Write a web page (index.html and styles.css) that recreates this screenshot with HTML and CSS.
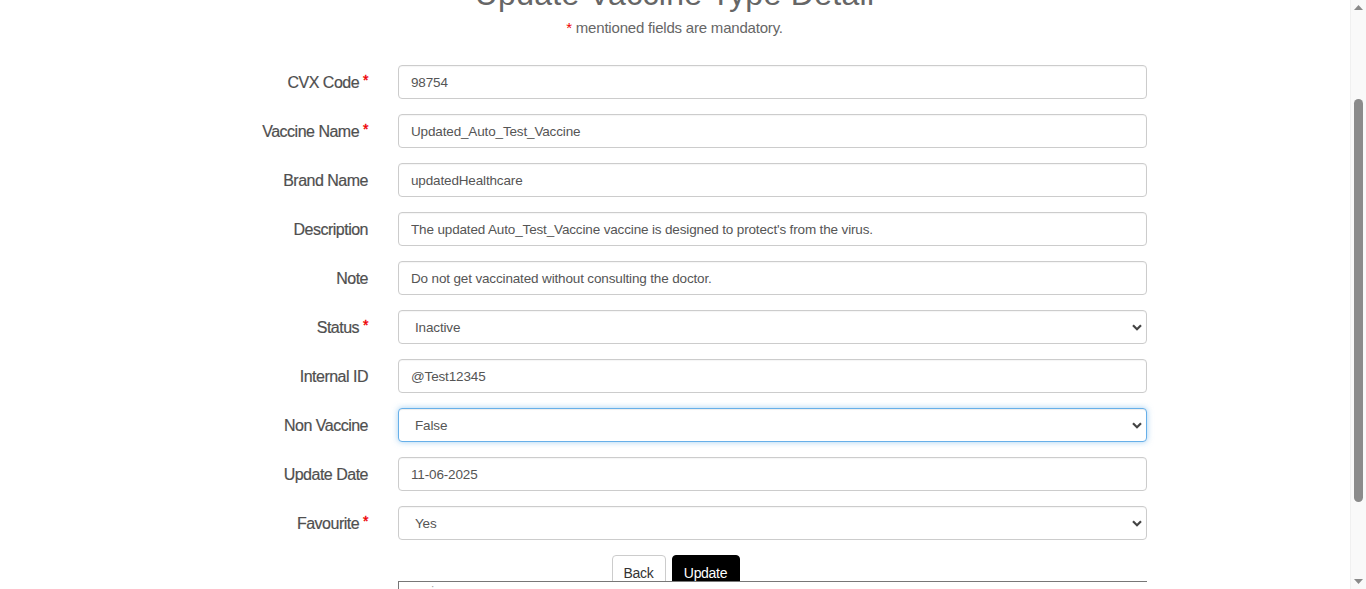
FILE: index.html
```html
<!DOCTYPE html>
<html lang="en">
<head>
<meta charset="utf-8">
<title>Update Vaccine Type Detail</title>
<link rel="stylesheet" href="styles.css">
</head>
<body>
<div class="page">
  <h1 class="title">Update Vaccine Type Detail</h1>
  <p class="subtitle"><span class="req">*</span> mentioned fields are mandatory.</p>

  <form class="form">
    <div class="row">
      <label class="label">CVX Code <span class="req">*</span></label>
      <input class="control" type="text" value="98754">
    </div>
    <div class="row">
      <label class="label">Vaccine Name <span class="req">*</span></label>
      <input class="control" type="text" value="Updated_Auto_Test_Vaccine">
    </div>
    <div class="row">
      <label class="label">Brand Name</label>
      <input class="control" type="text" value="updatedHealthcare">
    </div>
    <div class="row">
      <label class="label">Description</label>
      <input class="control" type="text" value="The updated Auto_Test_Vaccine vaccine is designed to protect's from the virus.">
    </div>
    <div class="row">
      <label class="label">Note</label>
      <input class="control" type="text" value="Do not get vaccinated without consulting the doctor.">
    </div>
    <div class="row">
      <label class="label">Status <span class="req">*</span></label>
      <div class="select-wrap">
        <select class="control select"><option>Inactive</option><option>Active</option></select>
        <svg class="chev" width="10" height="7" viewBox="0 0 10 7"><path d="M1 1.2 L5 5.2 L9 1.2" fill="none" stroke="#444" stroke-width="2.2"/></svg>
      </div>
    </div>
    <div class="row">
      <label class="label">Internal ID</label>
      <input class="control" type="text" value="@Test12345">
    </div>
    <div class="row">
      <label class="label">Non Vaccine</label>
      <div class="select-wrap">
        <select class="control select focus"><option>False</option><option>True</option></select>
        <svg class="chev" width="10" height="7" viewBox="0 0 10 7"><path d="M1 1.2 L5 5.2 L9 1.2" fill="none" stroke="#444" stroke-width="2.2"/></svg>
      </div>
    </div>
    <div class="row">
      <label class="label">Update Date</label>
      <input class="control" type="text" value="11-06-2025">
    </div>
    <div class="row">
      <label class="label">Favourite <span class="req">*</span></label>
      <div class="select-wrap">
        <select class="control select"><option>Yes</option><option>No</option></select>
        <svg class="chev" width="10" height="7" viewBox="0 0 10 7"><path d="M1 1.2 L5 5.2 L9 1.2" fill="none" stroke="#444" stroke-width="2.2"/></svg>
      </div>
    </div>

    <div class="actions">
      <button type="button" class="btn btn-back">Back</button>
      <button type="button" class="btn btn-update">Update</button>
    </div>
    <div class="below"><span class="dot">·</span></div>
  </form>
</div>

<div class="scrollbar">
  <svg class="arrow up" width="9" height="5" viewBox="0 0 9 5"><path d="M0 5 L4.5 0 L9 5 Z" fill="#8a8a8a"/></svg>
  <div class="thumb"></div>
  <svg class="arrow down" width="9" height="5" viewBox="0 0 9 5"><path d="M0 0 L4.5 5 L9 0 Z" fill="#8a8a8a"/></svg>
</div>
</body>
</html>
```

FILE: styles.css
```css
html, body {
  margin: 0;
  padding: 0;
  overflow: hidden;
  background: #fff;
}

body {
  font-family: "Liberation Sans", Arial, sans-serif;
  color: #555;
}

.page {
  width: 1349px;
  height: 589px;
  overflow: hidden;
}

.title {
  margin: -23px 0 0 0;
  text-align: center;
  font-size: 32px;
  line-height: 35px;
  font-weight: 400;
  color: #666;
  letter-spacing: 0.3px;
}

.subtitle {
  margin: 7px 0 0 0;
  text-align: center;
  font-size: 15px;
  line-height: 17px;
  color: #666;
  letter-spacing: -0.2px;
}

.req {
  color: #e00;
}

.form {
  margin-top: 29px;
  display: flex;
  flex-direction: column;
  gap: 15px;
}

.row {
  display: flex;
  align-items: center;
  gap: 30px;
  height: 34px;
}

.label {
  width: 368px;
  padding-top: 2px;
  text-align: right;
  font-size: 16px;
  color: #4f4f4f;
  letter-spacing: -0.5px;
  -webkit-text-stroke: 0.2px #4f4f4f;
}

.label .req {
  font-size: 14px;
  position: relative;
  top: -3px;
  -webkit-text-stroke: 0.4px #e00;
}

.control {
  box-sizing: border-box;
  width: 749px;
  height: 34px;
  border: 1px solid #ccc;
  border-radius: 4px;
  padding: 0 12px;
  font-family: "Liberation Sans", Arial, sans-serif;
  font-size: 13.5px;
  letter-spacing: -0.15px;
  color: #555;
  background: #fff;
  outline: none;
  box-shadow: inset 0 1px 1px rgba(0, 0, 0, 0.04);
}

.select-wrap {
  position: relative;
  width: 749px;
  height: 34px;
}

.select {
  appearance: none;
  -webkit-appearance: none;
  padding-left: 16px;
}

.select.focus {
  border-color: #66afe9;
  box-shadow: inset 0 1px 1px rgba(0, 0, 0, 0.075), 0 0 6px rgba(102, 175, 233, 0.6);
}

.chev {
  position: absolute;
  right: 5px;
  top: 14px;
  pointer-events: none;
}

.actions {
  margin-top: 0;
  height: 26px;
  display: flex;
  justify-content: center;
  gap: 6px;
  overflow: hidden;
  padding-left: 2px;
}

.btn {
  height: 34px;
  border-radius: 4px;
  font-family: "Liberation Sans", Arial, sans-serif;
  font-size: 14px;
  letter-spacing: -0.3px;
  padding: 8px 12px 0 12px;
  box-sizing: border-box;
  line-height: 18px;
  align-self: flex-start;
  display: flex;
  align-items: flex-start;
  justify-content: center;
}

.btn-back {
  width: 54px;
  background: #fff;
  border: 1px solid #ccc;
  color: #333;
}

.btn-update {
  width: 68px;
  background: #000;
  border: 1px solid #000;
  color: #fff;
}

.below {
  margin-top: -15px;
  margin-left: 398px;
  width: 749px;
  height: 20px;
  border-top: 1px solid #777;
  border-left: 1px solid #777;
  box-sizing: border-box;
  position: relative;
}

.dot {
  position: absolute;
  left: 32px;
  top: 0;
  font-size: 10px;
  color: #999;
  line-height: 10px;
}

.scrollbar {
  position: fixed;
  top: 0;
  right: 0;
  width: 15px;
  height: 589px;
  background: #f9f9f9;
  border-left: 1px solid #f0f0f0;
}

.arrow {
  position: absolute;
  left: 3px;
}

.arrow.up {
  top: 5px;
}

.arrow.down {
  bottom: 5px;
}

.thumb {
  position: absolute;
  left: 3px;
  top: 99px;
  width: 9px;
  height: 403px;
  background: #8b8b8b;
  border-radius: 5px;
}
```
